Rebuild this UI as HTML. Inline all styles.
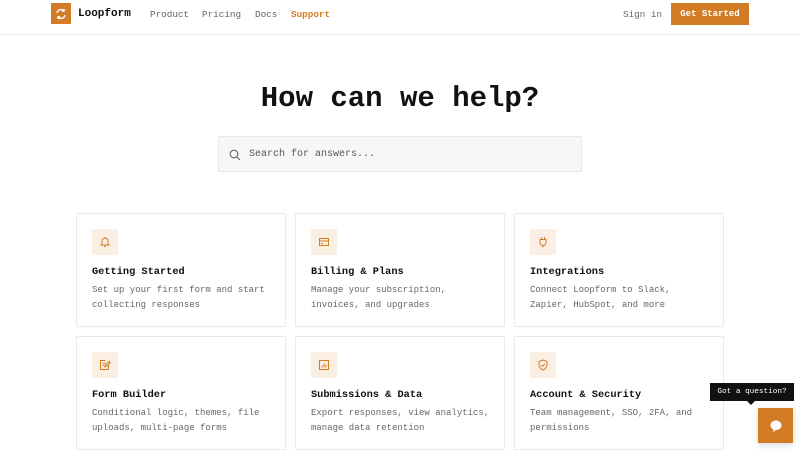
<!DOCTYPE html>
<html><head><style>
*{margin:0;padding:0;box-sizing:border-box}
body{width:800px;height:450px;overflow:hidden;background:#fff;font-family:"Liberation Mono",monospace;color:#111;position:relative}
.hdr{position:absolute;left:0;top:0;width:800px;height:35px;border-bottom:1px solid #ececec}
.logo{position:absolute;left:51px;top:3px;width:20px;height:21px;background:#d27c26;display:flex;align-items:center;justify-content:center}
.brand{position:absolute;left:78px;top:8px;font-size:11px;font-weight:bold}
.nav{position:absolute;top:9px;font-size:9.3px;color:#666}
.btn{position:absolute;left:671px;top:3px;width:78px;height:22px;background:#d27c26;color:#fff;font-size:9px;font-weight:bold;display:flex;align-items:center;justify-content:center}
h1{position:absolute;left:0;width:800px;top:82px;text-align:center;font-size:29px;font-weight:bold}
.search{position:absolute;left:218px;top:136px;width:364px;height:36px;background:#f7f7f7;border:1px solid #e8e8e8}
.search span{position:absolute;left:30px;top:12px;font-size:10px;color:#555}
.card{position:absolute;width:210px;height:114px;border:1px solid #e9e9e9;border-radius:2px}
.ic{position:absolute;left:15px;top:15px;width:26px;height:26px;background:#fbefe3;display:flex;align-items:center;justify-content:center}
.card b{position:absolute;left:15px;top:52px;font-size:10.3px}
.card p{position:absolute;left:15px;top:69px;font-size:9px;color:#666;line-height:14.5px;width:181px}
.tip{position:absolute;left:710px;top:383px;width:84px;height:18px;background:#111;color:#fff;font-size:7.7px;display:flex;align-items:center;justify-content:center}
.tip:after{content:"";position:absolute;left:37px;bottom:-4px;border:4px solid transparent;border-bottom:0;border-top-color:#111}
.chat{position:absolute;left:758px;top:408px;width:35px;height:35px;background:#d27c26;display:flex;align-items:center;justify-content:center;box-shadow:0 2px 6px rgba(0,0,0,.15)}
</style></head><body>
<div class="hdr">
<div class="logo"><svg width="12" height="12" viewBox="0 0 12 12" fill="none" stroke="#fff" stroke-width="1.4"><path d="M2 5a4 4 0 0 1 7-2M10 7a4 4 0 0 1-7 2"/><path d="M9 1v2.2H6.8M3 11V8.8h2.2"/></svg></div>
<div class="brand">Loopform</div>
<div class="nav" style="left:150px">Product</div>
<div class="nav" style="left:202px">Pricing</div>
<div class="nav" style="left:255px">Docs</div>
<div class="nav" style="left:291px;color:#d27c26;font-weight:bold">Support</div>
<div class="nav" style="left:623px">Sign in</div>
<div class="btn">Get Started</div>
</div>
<h1>How can we help?</h1>
<div class="search"><svg style="position:absolute;left:10px;top:12px" width="12" height="12" viewBox="0 0 12 12" fill="none" stroke="#666" stroke-width="1.1"><circle cx="5" cy="5" r="3.8"/><path d="M8 8l3 3"/></svg><span>Search for answers...</span></div>

<div class="card" style="left:76px;top:213px"><div class="ic"><svg width="12" height="12" viewBox="0 0 12 12" fill="none" stroke="#d27c26" stroke-width="1"><path d="M3 8V5a3 3 0 0 1 6 0v3l1 1H2zM5 10.5h2M6 1v1"/></svg></div><b>Getting Started</b><p>Set up your first form and start collecting responses</p></div>
<div class="card" style="left:295px;top:213px"><div class="ic"><svg width="12" height="12" viewBox="0 0 12 12" fill="none" stroke="#d27c26" stroke-width="1"><rect x="1.5" y="2.5" width="9" height="7"/><path d="M1.5 5h9M3 7.5h2"/></svg></div><b>Billing &amp; Plans</b><p>Manage your subscription, invoices, and upgrades</p></div>
<div class="card" style="left:514px;top:213px"><div class="ic"><svg width="12" height="12" viewBox="0 0 12 12" fill="none" stroke="#d27c26" stroke-width="1"><path d="M4.5 1v2.5M7.5 1v2.5M3 3.5h6v3a3 3 0 0 1-6 0zM6 9.5v2"/></svg></div><b>Integrations</b><p>Connect Loopform to Slack, Zapier, HubSpot, and more</p></div>
<div class="card" style="left:76px;top:336px"><div class="ic"><svg width="12" height="12" viewBox="0 0 12 12" fill="none" stroke="#d27c26" stroke-width="1"><path d="M9.5 6v4.5h-8v-9h5M3.5 4.5h3M3.5 6.5h2M6 8l.5-2 3.5-3.5 1.2 1.2L7.7 7.2z"/></svg></div><b>Form Builder</b><p>Conditional logic, themes, file uploads, multi-page forms</p></div>
<div class="card" style="left:295px;top:336px"><div class="ic"><svg width="12" height="12" viewBox="0 0 12 12" fill="none" stroke="#d27c26" stroke-width="1"><rect x="1.5" y="1.5" width="9" height="9"/><path d="M4 8.5v-2M6 8.5v-4M8 8.5v-3"/></svg></div><b>Submissions &amp; Data</b><p>Export responses, view analytics, manage data retention</p></div>
<div class="card" style="left:514px;top:336px"><div class="ic"><svg width="12" height="12" viewBox="0 0 12 12" fill="none" stroke="#d27c26" stroke-width="1"><path d="M6 1l4 1.5v3.5c0 2.5-2 4-4 5-2-1-4-2.5-4-5V2.5z"/><path d="M4.2 6l1.3 1.3 2.4-2.4"/></svg></div><b>Account &amp; Security</b><p>Team management, SSO, 2FA, and permissions</p></div>

<div class="tip">Got a question?</div>
<div class="chat"><svg width="14" height="14" viewBox="0 0 14 14"><path d="M7 1.5c3 0 5.5 2 5.5 4.7S10 11 7 11l-3 2 .5-2.6C2.8 9.6 1.5 8 1.5 6.2 1.5 3.5 4 1.5 7 1.5z" fill="#fff"/></svg></div>
</body></html>
